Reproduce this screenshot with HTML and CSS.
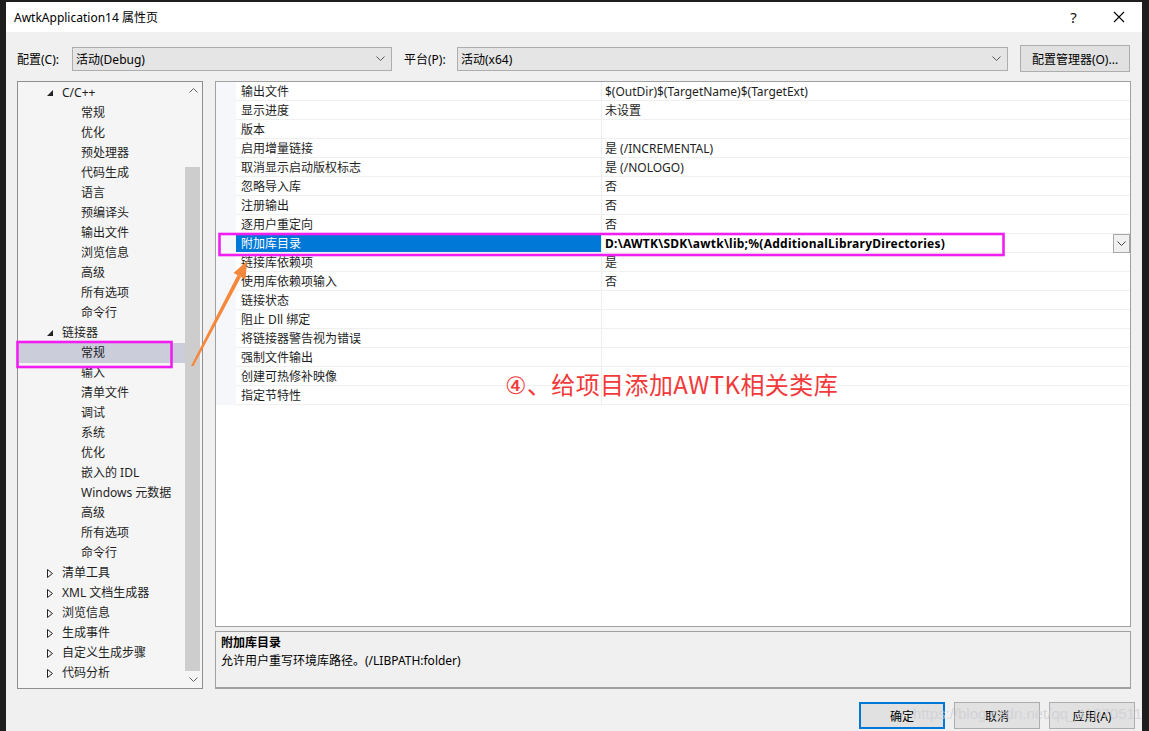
FILE: index.html
```html
<!DOCTYPE html>
<html lang="zh">
<head>
<meta charset="utf-8">
<title>AwtkApplication14 属性页</title>
<link rel="stylesheet" href="styles.css">
</head>
<body>
<div class="screen">
  <div class="dialog">
    <div class="titlebar">
      <span class="title">AwtkApplication14 属性页</span>
      <span class="tb-btn help">?</span>
      <span class="tb-btn close"><svg width="12" height="12" viewBox="0 0 12 12"><path d="M1 1 L11 11 M11 1 L1 11" stroke="#000" stroke-width="1.1" fill="none"/></svg></span>
    </div>
    <div class="body">
      <div class="config-row">
        <span class="cfg-label">配置(C):</span>
        <div class="combo combo-cfg"><span>活动(Debug)</span><svg class="chev" width="9" height="5" viewBox="0 0 9 5"><path d="M0.5 0.5 L4.5 4.5 L8.5 0.5" stroke="#555" fill="none"/></svg></div>
        <span class="cfg-label plat">平台(P):</span>
        <div class="combo combo-plat"><span>活动(x64)</span><svg class="chev" width="9" height="5" viewBox="0 0 9 5"><path d="M0.5 0.5 L4.5 4.5 L8.5 0.5" stroke="#555" fill="none"/></svg></div>
        <div class="btn cfg-btn">配置管理器(O)...</div>
      </div>
      <div class="main">
        <div class="tree">
          <div class="tree-list">
            <div class="node l1"><span class="tw"><svg width="6" height="6" viewBox="0 0 6 6"><path d="M6 0 L6 6 L0 6 Z" fill="#222"/></svg></span>C/C++</div>
            <div class="node l2">常规</div>
            <div class="node l2">优化</div>
            <div class="node l2">预处理器</div>
            <div class="node l2">代码生成</div>
            <div class="node l2">语言</div>
            <div class="node l2">预编译头</div>
            <div class="node l2">输出文件</div>
            <div class="node l2">浏览信息</div>
            <div class="node l2">高级</div>
            <div class="node l2">所有选项</div>
            <div class="node l2">命令行</div>
            <div class="node l1"><span class="tw"><svg width="6" height="6" viewBox="0 0 6 6"><path d="M6 0 L6 6 L0 6 Z" fill="#222"/></svg></span>链接器</div>
            <div class="node l2 sel">常规</div>
            <div class="node l2">输入</div>
            <div class="node l2">清单文件</div>
            <div class="node l2">调试</div>
            <div class="node l2">系统</div>
            <div class="node l2">优化</div>
            <div class="node l2">嵌入的 IDL</div>
            <div class="node l2">Windows 元数据</div>
            <div class="node l2">高级</div>
            <div class="node l2">所有选项</div>
            <div class="node l2">命令行</div>
            <div class="node l1"><span class="tw"><svg width="6" height="9" viewBox="0 0 6 9"><path d="M0.5 0.5 L5.5 4.5 L0.5 8.5 Z" fill="none" stroke="#222"/></svg></span>清单工具</div>
            <div class="node l1"><span class="tw"><svg width="6" height="9" viewBox="0 0 6 9"><path d="M0.5 0.5 L5.5 4.5 L0.5 8.5 Z" fill="none" stroke="#222"/></svg></span>XML 文档生成器</div>
            <div class="node l1"><span class="tw"><svg width="6" height="9" viewBox="0 0 6 9"><path d="M0.5 0.5 L5.5 4.5 L0.5 8.5 Z" fill="none" stroke="#222"/></svg></span>浏览信息</div>
            <div class="node l1"><span class="tw"><svg width="6" height="9" viewBox="0 0 6 9"><path d="M0.5 0.5 L5.5 4.5 L0.5 8.5 Z" fill="none" stroke="#222"/></svg></span>生成事件</div>
            <div class="node l1"><span class="tw"><svg width="6" height="9" viewBox="0 0 6 9"><path d="M0.5 0.5 L5.5 4.5 L0.5 8.5 Z" fill="none" stroke="#222"/></svg></span>自定义生成步骤</div>
            <div class="node l1"><span class="tw"><svg width="6" height="9" viewBox="0 0 6 9"><path d="M0.5 0.5 L5.5 4.5 L0.5 8.5 Z" fill="none" stroke="#222"/></svg></span>代码分析</div>
          </div>
          <div class="vscroll">
            <div class="sb-btn"><svg width="9" height="5" viewBox="0 0 9 5"><path d="M0.5 4.5 L4.5 0.5 L8.5 4.5" stroke="#606060" fill="none"/></svg></div>
            <div class="sb-track"><div class="sb-thumb"></div></div>
            <div class="sb-btn"><svg width="9" height="5" viewBox="0 0 9 5"><path d="M0.5 0.5 L4.5 4.5 L8.5 0.5" stroke="#606060" fill="none"/></svg></div>
          </div>
        </div>
        <div class="right">
          <div class="grid">
            <div class="prow"><span class="gut"></span><span class="pname">输出文件</span><span class="pval">$(OutDir)$(TargetName)$(TargetExt)</span></div>
            <div class="prow"><span class="gut"></span><span class="pname">显示进度</span><span class="pval">未设置</span></div>
            <div class="prow"><span class="gut"></span><span class="pname">版本</span><span class="pval"></span></div>
            <div class="prow"><span class="gut"></span><span class="pname">启用增量链接</span><span class="pval">是 (/INCREMENTAL)</span></div>
            <div class="prow"><span class="gut"></span><span class="pname">取消显示启动版权标志</span><span class="pval">是 (/NOLOGO)</span></div>
            <div class="prow"><span class="gut"></span><span class="pname">忽略导入库</span><span class="pval">否</span></div>
            <div class="prow"><span class="gut"></span><span class="pname">注册输出</span><span class="pval">否</span></div>
            <div class="prow"><span class="gut"></span><span class="pname">逐用户重定向</span><span class="pval">否</span></div>
            <div class="prow psel"><span class="gut"></span><span class="pname">附加库目录</span><span class="pval"><b>D:\AWTK\SDK\awtk\lib;%(AdditionalLibraryDirectories)</b><span class="ddbtn"><svg width="9" height="5" viewBox="0 0 9 5"><path d="M0.5 0.5 L4.5 4.5 L8.5 0.5" stroke="#444" fill="none"/></svg></span></span></div>
            <div class="prow"><span class="gut"></span><span class="pname">链接库依赖项</span><span class="pval">是</span></div>
            <div class="prow"><span class="gut"></span><span class="pname">使用库依赖项输入</span><span class="pval">否</span></div>
            <div class="prow"><span class="gut"></span><span class="pname">链接状态</span><span class="pval"></span></div>
            <div class="prow"><span class="gut"></span><span class="pname">阻止 Dll 绑定</span><span class="pval"></span></div>
            <div class="prow"><span class="gut"></span><span class="pname">将链接器警告视为错误</span><span class="pval"></span></div>
            <div class="prow"><span class="gut"></span><span class="pname">强制文件输出</span><span class="pval"></span></div>
            <div class="prow"><span class="gut"></span><span class="pname">创建可热修补映像</span><span class="pval"></span></div>
            <div class="prow"><span class="gut"></span><span class="pname">指定节特性</span><span class="pval"></span></div>
          </div>
          <div class="desc">
            <div class="desc-title">附加库目录</div>
            <div class="desc-text">允许用户重写环境库路径。(/LIBPATH:folder)</div>
          </div>
        </div>
      </div>
      <div class="buttons">
        <div class="btn dlg-btn default">确定</div>
        <div class="btn dlg-btn">取消</div>
        <div class="btn dlg-btn">应用(A)</div>
      </div>
    </div>
  </div>

  <svg class="marks" width="1149" height="731" viewBox="0 0 1149 731">
    <rect x="17.5" y="342" width="154" height="25" fill="none" stroke="#f01ef0" stroke-width="2.6"/>
    <rect x="219.5" y="234" width="784" height="21" fill="none" stroke="#f01ef0" stroke-width="2.6"/>
    <polygon points="191,366 193.5,366 241,277 237.5,275" fill="#f5883a"/>
    <polygon points="247,261 245.5,279.5 233.5,273" fill="#f5883a"/>
  </svg>
  <div class="annot"><span class="circ">④</span>、给项目添加AWTK相关类库</div>
  <div class="watermark">https://blog.csdn.net/qq_41070511</div>
</div>
</body>
</html>
```

FILE: styles.css
```css
* { box-sizing: border-box; }
html, body { margin: 0; padding: 0; }
body {
  font-family: "Noto Sans", "Noto Sans CJK SC", sans-serif;
  font-size: 12px;
  color: #000;
  background: #1e1e1e;
}
.screen {
  position: relative;
  width: 1149px;
  height: 731px;
  overflow: hidden;
  background: #1e1e1e;
}
.dialog {
  margin: 2px 0 0 6px;
  width: 1136px;
  height: 729px;
  background: #f0f0f0;
  display: flex;
  flex-direction: column;
}
.titlebar {
  height: 30px;
  background: #fff;
  display: flex;
  align-items: center;
  padding-left: 8px;
  padding-right: 1px;
}
.title { flex: 1; font-size: 12px; }
.tb-btn {
  width: 45px;
  height: 30px;
  display: flex;
  align-items: center;
  justify-content: center;
}
.help { font-size: 15px; color: #111; }
.body {
  flex: 1;
  display: flex;
  flex-direction: column;
  padding-top: 13px;
}
.config-row {
  display: flex;
  align-items: center;
  height: 27px;
  padding: 0 12px 0 11px;
}
.cfg-label { width: 55px; white-space: nowrap; }
.cfg-label.plat { width: 53px; margin-left: 12px; }
.combo {
  height: 24px;
  border: 1px solid #adadad;
  background: #e5e5e5;
  display: flex;
  align-items: center;
  justify-content: space-between;
  padding: 0 6px 0 3px;
}
.combo-cfg { width: 320px; }
.combo-plat { width: 551px; }
.btn {
  background: #e1e1e1;
  border: 1px solid #adadad;
  display: flex;
  align-items: center;
  justify-content: center;
  white-space: nowrap;
}
.cfg-btn { width: 110px; height: 27px; margin-left: 12px; }

.main {
  margin-top: 9px;
  display: flex;
  gap: 12px;
  padding: 0 11px;
  height: 608px;
}
.tree {
  width: 186px;
  border: 1px solid #8f8f8f;
  background: #f5f5f5;
  display: flex;
}
.tree-list {
  width: 167px;
  padding-top: 1px;
}
.node {
  height: 20px;
  line-height: 20px;
  display: flex;
  align-items: center;
  white-space: nowrap;
  color: #1e1e1e;
}
.l1 { padding-left: 29px; }
.l2 { padding-left: 63px; }
.tw {
  width: 15px;
  display: flex;
  align-items: center;
}
.sel { background: #cbcdda; margin-left: 1px; padding-left: 62px; }
.vscroll {
  width: 17px;
  display: flex;
  flex-direction: column;
}
.sb-btn {
  height: 17px;
  display: flex;
  align-items: center;
  justify-content: center;
}
.sb-track { flex: 1; }
.sb-thumb {
  margin-top: 68px;
  width: 15px;
  height: 504px;
  background: #cdcdcd;
}

.right {
  width: 916px;
  display: flex;
  flex-direction: column;
  gap: 4px;
}
.grid {
  height: 546px;
  border: 1px solid #a0a0a0;
  background: #fff;
}
.prow {
  display: flex;
  height: 19px;
}
.gut {
  width: 20px;
  background: #f5f7fb;
}
.pname {
  width: 366px;
  padding-left: 5px;
  border-right: 1px solid #ededed;
  border-bottom: 1px solid #f0f0f0;
  line-height: 20px;
  white-space: nowrap;
  color: #1e1e1e;
}
.pval {
  flex: 1;
  padding-left: 3px;
  border-bottom: 1px solid #f0f0f0;
  line-height: 20px;
  white-space: nowrap;
  display: flex;
  justify-content: space-between;
  color: #1e1e1e;
}
.psel .pname { background: #0078d7; color: #fff; }
.psel .pval { color: #000; }
.psel b { font-weight: 700; letter-spacing: 0.25px; }
.ddbtn {
  width: 17px;
  height: 19px;
  border: 1px solid #a8a8a8;
  background: #f0f0f0;
  display: flex;
  align-items: center;
  justify-content: center;
}
.desc {
  height: 58px;
  border: 1px solid #a0a0a0;
  border-bottom-width: 2px;
  background: #f0f0f0;
  padding: 2px 5px 0;
}
.desc-title { font-weight: 700; line-height: 18px; }
.desc-text { line-height: 18px; }

.buttons {
  margin-top: 13px;
  display: flex;
  justify-content: flex-end;
  gap: 9px;
  padding-right: 7px;
}
.dlg-btn { width: 86px; height: 27px; }
.dlg-btn.default { border: 2px solid #0078d7; }

.marks {
  position: absolute;
  left: 0;
  top: 0;
  pointer-events: none;
}
.annot {
  position: absolute;
  left: 505px;
  top: 369px;
  font-family: "Noto Sans CJK SC", sans-serif;
  font-size: 24px;
  line-height: 30px;
  letter-spacing: 0.4px;
  color: #f23a3a;
  white-space: nowrap;
}
.circ { font-family: "DejaVu Sans", sans-serif; font-size: 24px; }
.watermark {
  position: absolute;
  left: 913px;
  top: 705px;
  font-family: "Liberation Sans", sans-serif;
  font-size: 15px;
  color: rgba(205, 205, 210, 0.75);
  white-space: nowrap;
}
```
